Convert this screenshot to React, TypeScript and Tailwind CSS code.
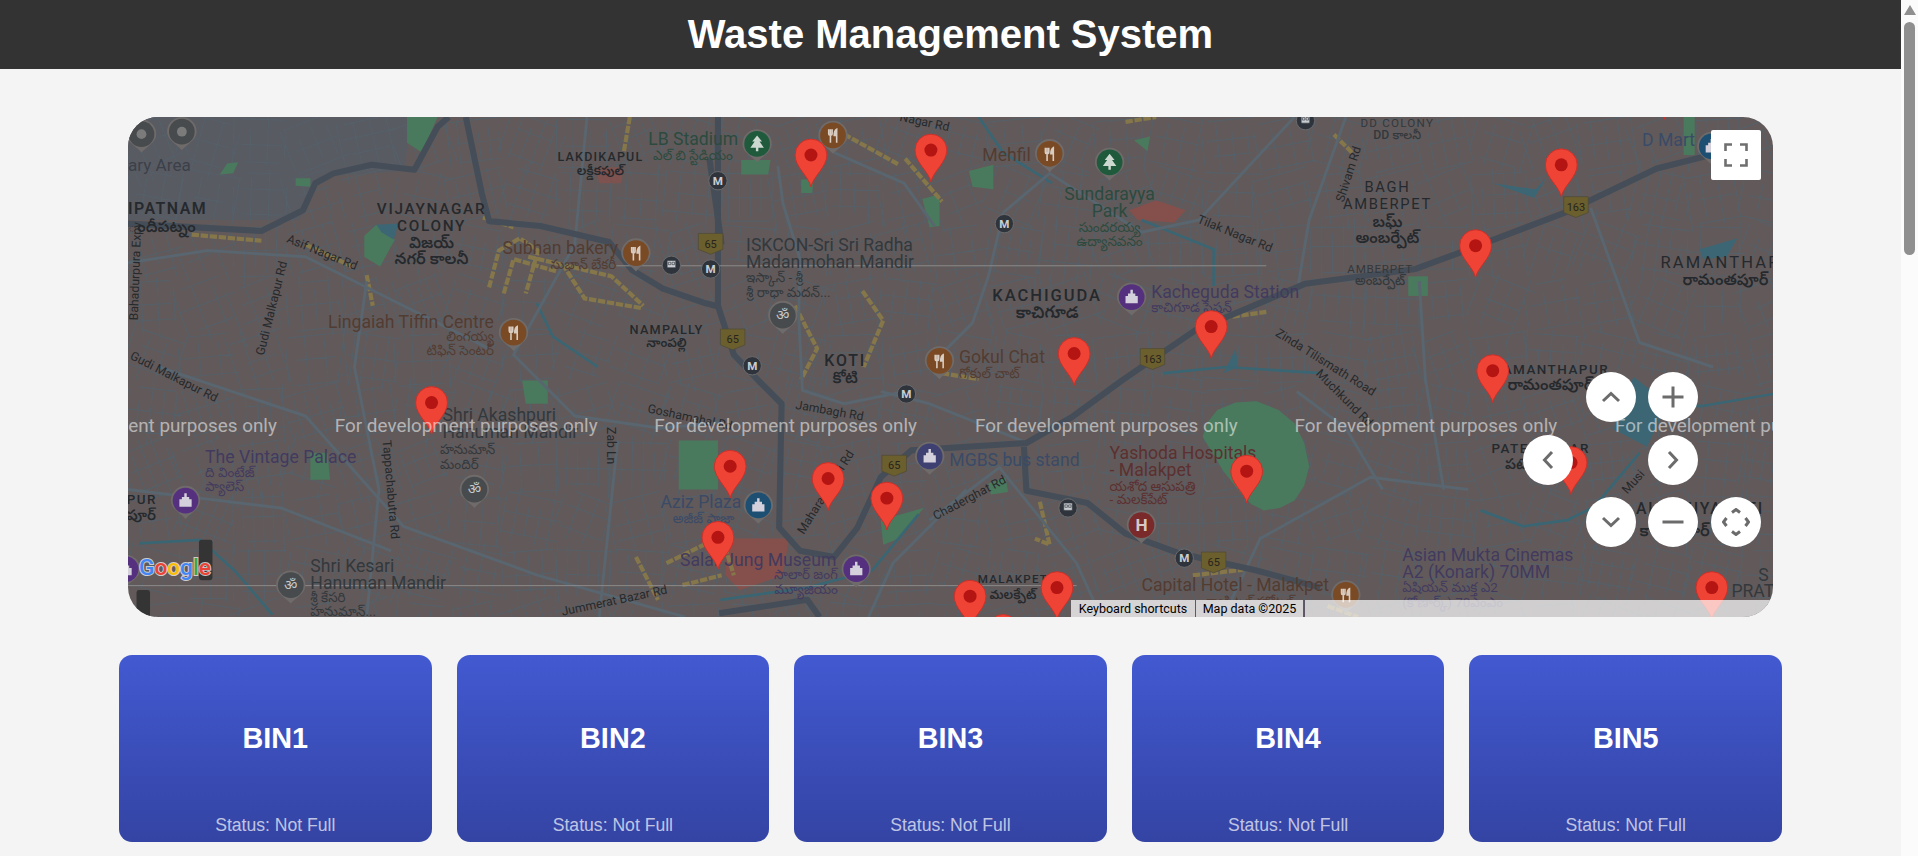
import React from 'react';

// all map geometry is in the coordinates of the 1568 wide preview (viewBox below)
const FONT = 'Roboto, "Noto Sans", "Noto Sans Telugu", sans-serif';

const AREA = '#25292d';
const BROWN = '#523c32';
const PURPLE = '#423a5f';
const GREEN = '#2c4a3e';
const NAVY = '#3b4a66';
const MAROON = '#5c3030';
const GREY = '#33383c';

type LabelRow = [string, number, number, number, string, 'start' | 'middle' | 'end', number?, number?];

const labels: LabelRow[] = [
  ['ary Area', 105, 140, 14, '#3c4048', 'start'],
  ['IPATNAM', 105, 175, 13, AREA, 'start', 600, 1.2],
  ['ందీపట్నం', 105, 190, 13, AREA, 'start', 600],
  ['VIJAYNAGAR', 353, 175, 12.5, AREA, 'middle', 500, 1.4],
  ['COLONY', 353, 189, 12.5, AREA, 'middle', 500, 1.4],
  ['విజయ్', 353, 203, 13, AREA, 'middle', 600],
  ['నగర్ కాలనీ', 353, 216, 13, AREA, 'middle', 600],
  ['LAKDIKAPUL', 491, 132, 10.2, AREA, 'middle', 500, 1],
  ['లక్డీకపుల్', 491, 143, 10.5, AREA, 'middle', 600],
  ['LB Stadium', 530, 119, 14.4, GREEN, 'start'],
  ['ఎల్ బి స్టేడియం', 534, 131, 11, GREEN, 'start'],
  ['Subhan bakery', 411, 208, 14.4, BROWN, 'start'],
  ['సుభాన్ బేకరీ', 504, 220, 11, BROWN, 'end'],
  ['Lingaiah Tiffin Centre', 404, 268, 14.4, BROWN, 'end'],
  ['లింగయ్య', 404, 279, 11, BROWN, 'end'],
  ['టిఫిన్ సెంటర్', 404, 290, 11, BROWN, 'end'],
  ['NAMPALLY', 545, 273, 10.4, AREA, 'middle', 500, 1],
  ['నాంపల్లి', 545, 284, 10.5, AREA, 'middle', 600],
  ['KOTI', 691, 299, 13, AREA, 'middle', 500, 1.5],
  ['కోటి', 691, 313, 13, AREA, 'middle', 600],
  ['Gokul Chat', 784, 297, 14.4, BROWN, 'start'],
  ['గోకుల్ చాట్', 784, 309, 11, BROWN, 'start'],
  ['ISKCON-Sri Sri Radha', 610, 205, 14.4, GREY, 'start'],
  ['Madanmohan Mandir', 610, 219, 14.4, GREY, 'start'],
  ['ఇస్కాన్ - శ్రీ', 610, 231, 11, GREY, 'start'],
  ['శ్రీ రాధా మదన్...', 610, 243, 11, GREY, 'start'],
  ['Mehfil', 803, 132, 14.4, BROWN, 'start'],
  ['Sundarayya', 907, 164, 14.4, GREEN, 'middle'],
  ['Park', 907, 178, 14.4, GREEN, 'middle'],
  ['సుందరయ్య', 907, 190, 11, GREEN, 'middle'],
  ['ఉద్యానవనం', 907, 201, 11, GREEN, 'middle'],
  ['KACHIGUDA', 856, 246, 13.5, AREA, 'middle', 500, 1.6],
  ['కాచిగూడ', 856, 260, 13.5, AREA, 'middle', 600],
  ['Kacheguda Station', 941, 244, 14.4, PURPLE, 'start'],
  ['కాచిగూడ స్టేషన్', 941, 255, 11, PURPLE, 'start'],
  ['DD COLONY', 1142, 104, 9.5, GREY, 'middle', 400, 1],
  ['DD కాలనీ', 1142, 114, 10, GREY, 'middle', 500],
  ['BAGH', 1134, 157, 12, AREA, 'middle', 400, 1.4],
  ['AMBERPET', 1134, 171, 12, AREA, 'middle', 400, 1.4],
  ['బఘ్', 1134, 186, 13, AREA, 'middle', 600],
  ['అంబర్పేట్', 1134, 199, 13, AREA, 'middle', 600],
  ['AMBERPET', 1128, 223, 9.5, GREY, 'middle', 400, 0.6],
  ['అంబర్పేట్', 1128, 233, 10.5, GREY, 'middle', 500],
  ['RAMANTHAPUR', 1357, 219, 13.5, AREA, 'start', 400, 1.8],
  ['రామంతపూర్', 1375, 233, 13, AREA, 'start', 600],
  ['D Mart', 1342, 120, 14.4, NAVY, 'start'],
  ['RAMANTHAPUR', 1220, 306, 11, AREA, 'start', 500, 1.2],
  ['రామంతపూర్', 1232, 319, 13, AREA, 'start', 600],
  ['Shri Akashpuri', 362, 344, 14.4, GREY, 'start'],
  ['Hanuman Mandir', 362, 358, 14.4, GREY, 'start'],
  ['హనుమాన్', 360, 371, 11, GREY, 'start'],
  ['మందిర్', 360, 383, 11, GREY, 'start'],
  ['The Vintage Palace', 168, 378, 14.4, PURPLE, 'start'],
  ['ది వింటేజ్', 168, 390, 11, PURPLE, 'start'],
  ['ప్యాలెస్', 168, 401, 11, PURPLE, 'start'],
  ['PUR', 104, 412, 11, AREA, 'start', 500, 1.2],
  ['పూర్', 104, 425, 12, AREA, 'start', 600],
  ['Shri Kesari', 254, 467, 14.4, GREY, 'start'],
  ['Hanuman Mandir', 254, 481, 14.4, GREY, 'start'],
  ['శ్రీ కేసరి', 254, 492, 11, GREY, 'start'],
  ['హనుమాన్...', 254, 503, 11, GREY, 'start'],
  ['Aziz Plaza', 540, 415, 14.4, NAVY, 'start'],
  ['అజీజ్ ప్లాజా', 550, 427, 11, NAVY, 'start'],
  ['Salar Jung Museum', 556, 462, 14.4, PURPLE, 'start'],
  ['సాలార్ జంగ్', 685, 473, 11, PURPLE, 'end'],
  ['మ్యూజియం', 685, 485, 11, PURPLE, 'end'],
  ['MGBS bus stand', 776, 381, 14.4, NAVY, 'start'],
  ['Yashoda Hospitals', 907, 375, 14.4, MAROON, 'start'],
  ['- Malakpet', 907, 389, 14.4, MAROON, 'start'],
  ['యశోద ఆసుపత్రి', 907, 401, 11, MAROON, 'start'],
  ['- మలక్‌పేట్', 907, 412, 11, MAROON, 'start'],
  ['MALAKPET', 828, 476, 9.5, AREA, 'middle', 500, 1],
  ['మలక్పేట్', 828, 489, 10.5, AREA, 'middle', 600],
  ['Capital Hotel - Malakpet', 933, 483, 14.4, BROWN, 'start'],
  ['క్యాపిటల్ హోటల్', 1058, 495, 11, BROWN, 'end'],
  ['Asian Mukta Cinemas', 1146, 458, 14.4, PURPLE, 'start'],
  ['A2 (Konark) 70MM', 1146, 472, 14.4, PURPLE, 'start'],
  ['ఏషియన్ ముక్త ఎ2', 1146, 484, 11, PURPLE, 'start'],
  ['(కోణార్క్) 70ఎంఎం', 1146, 496, 11, PURPLE, 'start'],
  ['PATELNAGAR', 1219, 370, 11, AREA, 'start', 500, 1.2],
  ['పటేల్', 1230, 383, 12, AREA, 'start', 600],
  ['ALVANIYAKUTI', 1337, 420, 13, AREA, 'start', 500, 1.4],
  ['కాలనీపూర్', 1340, 438, 13, AREA, 'start', 600],
  ['S', 1437, 475, 14.4, GREY, 'start'],
  ['PRAT', 1415, 488, 14.4, GREY, 'start'],
];

const roadLabels: [string, number, number, number][] = [
  ['Asif Nagar Rd', 234, 198, 22],
  ['Gudi Malkapur Rd', 216, 291, -76],
  ['Gudi Malkapur Rd', 106, 293, 27],
  ['Bahadurpura Expy', 113, 262, -88],
  ['Tappachabutra Rd', 313, 360, 85],
  ['Goshamahal Rd', 529, 337, 12],
  ['Zab Ln', 496, 349, 90],
  ['Jambagh Rd', 650, 334, 10],
  ['Maharaj Gansi Rd', 657, 437, -58],
  ['Chaderghat Rd', 765, 425, -28],
  ['Jummerat Bazar Rd', 460, 503, -12],
  ['Tilak Nagar Rd', 978, 182, 22],
  ['Shivam Rd', 1098, 166, -72],
  ['Zinda Tilismath Road', 1042, 274, 32],
  ['Muchkund Rd', 1075, 306, 45],
  ['Musi', 1330, 404, -48],
  ['Nagar Rd', 735, 99, 12],
];

const parks = [
  '333,96 358,96 345,125 333,117',
  '298,193 308,184 323,196 311,218 298,210',
  '180,143 186,134 195,133 191,142',
  '242,146 254,146 254,153 242,152',
  '254,370 268,370 270,392 254,392',
  '555,360 587,360 587,400 555,400',
  '427,311 448,311 448,330 430,330',
  '606,131 630,131 628,143 606,143',
  '754,163 768,159 768,185 760,186',
  '792,140 812,135 812,155 795,153',
  '927,115 940,112 938,124',
  '720,425 755,415 735,440 722,445',
  '808,395 822,390 824,402 810,404',
  '1151,226 1167,226 1167,242 1151,242',
  '983,357 987,345 995,335 1010,329 1027,328 1045,335 1058,346 1066,362 1070,381 1066,397 1058,409 1046,415 1033,417 1023,412 1017,406 1000,385',
  '655,147 665,147 664,158 655,158',
  '1376,96 1385,96 1385,127 1376,127',
];

const water = [
  'M114 444 L164 441 L192 466 L223 502',
  'M933 180 L992 204 L992 234',
  'M951 305 L1002 300 L1079 305',
  'M439 248 L452 275 L489 300',
  'M589 490 L660 480 L713 466 L751 420',
  'M1210 417 L1245 430 L1281 425 L1303 414 L1340 370',
  'M1363 330 L1390 332 L1449 322',
  'M800 96 L820 125 L860 150',
];

const lakes = [
  '1335,308 1363,330 1346,365 1319,351',
  '1220,150 1254,162 1264,145 1255,155',
  '1389,204 1420,195 1411,210 1392,212',
  '308,184 326,183 322,196 312,190',
  '1000,305 1010,285 1012,300',
];

const yellow = [
  'M157 192 L214 197',
  'M400 235 L408 205 L425 195 L440 205 L430 240',
  'M412 240 L420 212 L455 222',
  'M432 210 L500 226 L526 250',
  'M460 216 L478 244 L525 252',
  'M300 225 L305 250',
  'M250 200 L288 218',
  'M395 178 L420 186',
  'M740 130 L770 165',
  'M690 110 L735 135',
  'M515 96 L510 125',
  'M650 250 L668 285 L655 310',
  'M705 238 L722 262 L706 300',
  'M770 305 L800 310',
  'M920 100 L945 96',
  'M1000 260 L1035 255',
  'M545 460 L590 438 L600 470',
  'M558 478 L590 470',
  'M520 455 L538 490',
  'M850 410 L858 445 L846 440',
  'M1085 495 L1110 504',
  'M1105 125 L1090 110',
  'M975 470 L1020 465',
];

const minorRoads = [
  'M105 215 L170 205 L250 210 L310 240 L400 285',
  'M300 230 L290 300 L310 400 L300 504',
  'M130 300 L250 340 L330 430 L440 470 L560 504',
  'M105 400 L230 415 L320 450',
  'M480 96 L470 200 L420 290 L470 340 L540 350 L590 345',
  'M505 360 L490 504',
  'M636 136 L640 166 L654 212 L653 259 L656 319 L690 330 L740 320',
  'M682 125 L739 150 L764 185',
  'M820 174 L808 226 L795 264 L773 286',
  'M820 174 L858 142 L933 190 L980 180 L1058 96',
  'M1100 96 L1070 180 L1060 240',
  'M760 425 L817 382 L880 460 L900 504',
  'M835 360 L760 330 L720 320',
  'M1000 504 L1030 440 L1120 390 L1200 400',
  'M1160 230 L1165 310 L1180 400',
  'M1300 170 L1340 280 L1400 300',
  'M1060 320 L1100 350 L1130 400',
  'M790 400 L730 460 L710 504',
];

const majorRoads = [
  'M105 183 L214 189 L248 172 L258 150 L273 142 L304 135 L339 139 L358 104 L367 96',
  'M381 96 L394 158 L400 181 L442 185 L498 198 L517 221 L542 236 L577 248 L589 251',
  'M587 96 L587 250 L600 290 L620 311 L639 330 L637 431 L654 450 L682 455 L701 431 L720 390 L745 368 L839 362 L876 341 L917 311 L977 270 L1067 232 L1157 220 L1192 207 L1279 174 L1354 138 L1398 127',
  'M837 365 L839 401 L889 411 L920 436 L964 452 L1027 466 L1079 480',
  'M588 501 L660 490 L670 504',
  'M580 130 L590 200',
];

const metros: [number, number, string][] = [
  [587, 148, 'M'], [581, 220, 'M'], [821, 183, 'M'], [615, 299, 'M'], [741, 322, 'M'], [968, 456, 'M'],
  [549, 217, 'B'], [873, 415, 'B'], [1067, 99, 'B'],
];

const shields: [number, number, string][] = [
  [581, 199, '65'], [599, 277, '65'], [731, 380, '65'], [992, 459, '65'], [942, 293, '163'], [1288, 169, '163'],
];

const pois: [number, number, string, string][] = [
  [681, 111, '#7a4a25', 'food'], [520, 207, '#7a4a25', 'food'], [420, 272, '#7a4a25', 'food'],
  [858, 126, '#7a4a25', 'food'], [768, 295, '#7a4a25', 'food'], [1100, 486, '#7a4a25', 'food'],
  [619, 118, '#1f5a3c', 'tree'], [907, 133, '#1f5a3c', 'tree'],
  [640, 258, '#474b4d', 'om'], [388, 400, '#474b4d', 'om'], [238, 478, '#474b4d', 'om'],
  [152, 409, '#55307f', 'box'], [925, 243, '#55307f', 'box'], [700, 465, '#55307f', 'box'], [103, 465, '#55307f', 'box'],
  [620, 413, '#1d4f72', 'box'], [760, 373, '#3d4070', 'box'], [1399, 120, '#1d4f72', 'box'],
  [933, 429, '#7a2a2a', 'H'], [116, 110, '#474b4d', 'ring'], [149, 108, '#474b4d', 'ring'],
];

const pins: [number, number][] = [
  [663, 153], [761, 149], [1276, 161], [1206, 227], [990, 293], [878, 315], [1220, 329], [353, 355],
  [597, 407], [677, 417], [725, 433], [587, 465], [1019, 411], [1284, 404], [793, 513], [864, 506],
  [1399, 506], [820, 541], [1360, 98],
];

const devStarts = [12, 274, 535, 797, 1058, 1320];

// seeded street mesh so the fine road texture stays the same on each load
function buildStreets() {
  let seed = 41;
  const rand = () => {
    seed = (seed * 16807) % 2147483647;
    return seed / 2147483647;
  };
  let d = '';
  for (let gx = 105; gx < 1449; gx += 44) {
    for (let gy = 96; gy < 504; gy += 44) {
      const a = rand() * 0.8 - 0.4;
      const cos = Math.cos(a);
      const sin = Math.sin(a);
      const cx = gx + 22;
      const cy = gy + 22;
      const gap = 8 + rand() * 9;
      for (let t = -24; t <= 24; t += gap) {
        const len = 10 + rand() * 16;
        const off = rand() * 8 - 4;
        d += `M${(cx + cos * t - sin * (off - len)).toFixed(1)} ${(cy + sin * t + cos * (off - len)).toFixed(1)}`;
        d += `L${(cx + cos * t - sin * (off + len)).toFixed(1)} ${(cy + sin * t + cos * (off + len)).toFixed(1)}`;
      }
      for (let t = -20; t <= 20; t += 12 + rand() * 10) {
        const len = 12 + rand() * 12;
        d += `M${(cx - cos * len - sin * t).toFixed(1)} ${(cy - sin * len + cos * t).toFixed(1)}`;
        d += `L${(cx + cos * len - sin * t).toFixed(1)} ${(cy + sin * len + cos * t).toFixed(1)}`;
      }
    }
  }
  return d;
}

const streets = buildStreets();

function PoiGlyph({ kind }: { kind: string }) {
  if (kind === 'food') {
    return (
      <g stroke="#d9ccc0" strokeWidth="1.3" fill="none">
        <path d="M-3.5 -5v3.5a1.4 1.4 0 0 0 2.8 0V-5M-2.1 -5v11" />
        <path d="M3 6V-5c-1.6 .8 -2 3 -2 5h2" fill="#d9ccc0" />
      </g>
    );
  }
  if (kind === 'tree') return <path d="M0 -7l4 5h-2l3.5 5h-4.5v3h-2v-3h-4.5l3.5-5h-2z" fill="#cdd8d0" />;
  if (kind === 'om') {
    return (
      <text y="4" textAnchor="middle" fontSize="12" fill="#c8c8c8" fontFamily={FONT}>
        ॐ
      </text>
    );
  }
  if (kind === 'H') {
    return (
      <text y="5" textAnchor="middle" fontSize="14" fontWeight="700" fill="#d8c8c8" fontFamily={FONT}>
        H
      </text>
    );
  }
  if (kind === 'ring') return <circle r="4" fill="#7b7b7b" />;
  return <path d="M-5 5V-1h2v-2h2v-3h2v3h2v2h2v6z" fill="#d4d0dc" />;
}

function MapPin({ x, y }: { x: number; y: number }) {
  return (
    <g transform={`translate(${x} ${y})`}>
      <path
        d="M0 0C-2 -9 -13 -16 -13 -26A13 13 0 1 1 13 -26C13 -16 2 -9 0 0Z"
        fill="#ef4335"
        stroke="#c9302a"
        strokeWidth="0.8"
      />
      <circle cy="-26" r="5.3" fill="#b41412" />
    </g>
  );
}

function CityMap() {
  return (
    <svg className="block w-full h-full" viewBox="105 96 1344 408" preserveAspectRatio="none">
      <rect x="105" y="96" width="1344" height="408" fill="#625a5a" />
      <polygon points="105,96 338,96 330,140 262,145 245,180 105,180" fill="#595b63" />
      <path d={streets} stroke="#546069" strokeWidth="0.9" fill="none" opacity="0.9" />
      {parks.map((p) => (
        <polygon key={p} points={p} fill="#4a7a5d" />
      ))}
      <polygon points="923,172 945,164 969,172 960,182 930,180" fill="#85504c" />
      <polygon points="595,440 645,440 640,470 605,482 593,470" fill="#85504c" />
      <polygon points="487,137 510,137 508,150 490,150" fill="#85504c" opacity="0.8" />
      {lakes.map((p) => (
        <polygon key={p} points={p} fill="#3d6675" />
      ))}
      {water.map((d) => (
        <path key={d} d={d} stroke="#3a6674" strokeWidth="2.2" fill="none" />
      ))}
      {yellow.map((d) => (
        <path key={d} d={d} stroke="#85774a" strokeWidth="3.4" strokeDasharray="6 1.4" fill="none" />
      ))}
      {minorRoads.map((d) => (
        <path key={d} d={d} stroke="#59656f" strokeWidth="2.4" fill="none" strokeLinejoin="round" />
      ))}
      {majorRoads.map((d) => (
        <path key={d} d={d} stroke="#454e58" strokeWidth="5" fill="none" strokeLinejoin="round" />
      ))}
      {/* tile seams */}
      <rect x="504" y="217" width="531" height="0.8" fill="#8c8a8a" />
      <rect x="105" y="478" width="775" height="0.8" fill="#8c8a8a" />
      {pois.map(([x, y, color, kind]) => (
        <g key={`${x}-${y}`} transform={`translate(${x} ${y})`}>
          <path d="M-12 0A12 12 0 0 1 12 0C12 7 4 10 0 15C-4 10 -12 7 -12 0Z" fill="#6f6b6a" />
          <circle r="10.5" fill={color} />
          <PoiGlyph kind={kind} />
        </g>
      ))}
      {metros.map(([x, y, t]) => (
        <g key={`${x}-${y}`} transform={`translate(${x} ${y})`}>
          <circle r="7.5" fill="#2f343c" stroke="#6b6b6d" strokeWidth="0.8" />
          {t === 'M' ? (
            <text y="3.5" textAnchor="middle" fontSize="9.5" fontWeight="700" fill="#c9cdd2" fontFamily={FONT}>
              M
            </text>
          ) : (
            <path d="M-3.5 -4h7v6h-7zM-2.5 -2.5h2v2h-2zM.5 -2.5h2v2h-2zM-3 2l-1 2.5M3 2l1 2.5" fill="#c9cdd2" stroke="#2f343c" strokeWidth="0.5" />
          )}
        </g>
      ))}
      {shields.map(([x, y, t]) => (
        <g key={`${x}-${y}`} transform={`translate(${x} ${y})`}>
          <path d="M-10 -8H10V5L0 9L-10 5Z" fill="#6c5f2e" stroke="#4e4a38" strokeWidth="0.6" />
          <text y="3.5" textAnchor="middle" fontSize="9" fill="#27251c" fontFamily={FONT}>
            {t}
          </text>
        </g>
      ))}
      {labels.map(([text, x, y, size, color, anchor, weight, spacing]) => (
        <text
          key={`${text}-${x}-${y}`}
          x={x}
          y={y}
          fontSize={size}
          fill={color}
          textAnchor={anchor}
          fontWeight={weight ?? 400}
          letterSpacing={spacing ?? 0}
          fontFamily={FONT}
        >
          {text}
        </text>
      ))}
      {roadLabels.map(([text, x, y, rot]) => (
        <text
          key={`${text}-${x}`}
          transform={`translate(${x} ${y}) rotate(${rot})`}
          fontSize="10"
          fill="#26292c"
          fontFamily={FONT}
        >
          {text}
        </text>
      ))}
      {pins.map(([x, y]) => (
        <MapPin key={`${x}-${y}`} x={x} y={y} />
      ))}
      {devStarts.map((x) => (
        <text key={x} x={x} y="353" fontSize="15.4" fill="#ffffff" fillOpacity="0.55" fontFamily={FONT}>
          For development purposes only
        </text>
      ))}
      {/* stray dark tiles by the logo */}
      <rect x="163" y="441" width="11" height="33" rx="2" fill="#343434" />
      <rect x="112" y="482" width="11" height="24" rx="2" fill="#343434" />
      <text
        x="114"
        y="470"
        fontSize="18.5"
        fontWeight="500"
        fontFamily={FONT}
        stroke="#f4f4f4"
        strokeOpacity="0.75"
        strokeWidth="1.6"
        paintOrder="stroke"
      >
        <tspan fill="#4285f4">G</tspan>
        <tspan fill="#ea4335">o</tspan>
        <tspan fill="#fbbc05">o</tspan>
        <tspan fill="#4285f4">g</tspan>
        <tspan fill="#34a853">l</tspan>
        <tspan fill="#ea4335">e</tspan>
      </text>
    </svg>
  );
}

function RoundButton({ label, className, children }: { label: string; className: string; children: React.ReactNode }) {
  return (
    <button
      type="button"
      aria-label={label}
      className={`w-[50px] h-[50px] rounded-full bg-white flex items-center justify-center ${className}`}
    >
      <svg width="28" height="28" viewBox="0 0 28 28" fill="none" stroke="#6b6b6b" strokeWidth="3">
        {children}
      </svg>
    </button>
  );
}

function MapControls() {
  return (
    <div className="absolute left-[1395px] top-[255px] grid grid-cols-[50px_50px_50px_50px] grid-rows-[50px_50px_50px] gap-x-[12.6px] gap-y-[12.5px]">
      <RoundButton label="Move up" className="col-start-2 row-start-1">
        <path d="M6 18L14 10.5L22 18" />
      </RoundButton>
      <RoundButton label="Zoom in" className="col-start-3 row-start-1">
        <path d="M3.5 14H24.5M14 3.5V24.5" />
      </RoundButton>
      <RoundButton label="Move left" className="col-start-1 row-start-2">
        <path d="M18 6L10.5 14L18 22" />
      </RoundButton>
      <RoundButton label="Move right" className="col-start-3 row-start-2">
        <path d="M10 6L17.5 14L10 22" />
      </RoundButton>
      <RoundButton label="Move down" className="col-start-2 row-start-3">
        <path d="M6 10L14 17.5L22 10" />
      </RoundButton>
      <RoundButton label="Zoom out" className="col-start-3 row-start-3">
        <path d="M3.5 14H24.5" />
      </RoundButton>
      <RoundButton label="Reset view" className="col-start-4 row-start-3">
        <path d="M10 4.5L14 1.5L18 4.5M10 23.5L14 26.5L18 23.5M4.5 10L1.5 14L4.5 18M23.5 10L26.5 14L23.5 18" />
      </RoundButton>
    </div>
  );
}

export default function App() {
  const bins = ['BIN1', 'BIN2', 'BIN3', 'BIN4', 'BIN5'];

  return (
    <div className="flex h-[856px] overflow-hidden bg-[#f4f4f4] font-['Liberation_Sans',Arial,sans-serif]">
      <div className="w-[1901px] shrink-0">
        <header className="h-[69px] bg-[#333333] flex items-center justify-center pb-[2px]">
          <h1 className="text-[40px] font-bold text-white">Waste Management System</h1>
        </header>

        <div className="relative w-[1645px] h-[500px] mx-auto mt-[48px] rounded-[30px] overflow-hidden">
          <CityMap />

          <button
            type="button"
            aria-label="Toggle fullscreen"
            className="absolute left-[1583px] top-[13px] w-[50px] h-[50px] bg-white rounded-[2px] flex items-center justify-center"
          >
            <svg width="24" height="24" viewBox="0 0 24 24" fill="none" stroke="#6f6f6f" strokeWidth="2.6">
              <path d="M1.5 8V1.5H8M16 1.5H22.5V8M22.5 16V22.5H16M8 22.5H1.5V16" />
            </svg>
          </button>

          <MapControls />

          {/* attribution strip */}
          <div className="absolute left-0 right-0 bottom-0 h-[17px] flex justify-end text-[12.5px] leading-[17px] text-black font-['Roboto',sans-serif]">
            <div className="w-[124px] text-center bg-[#d6d4d4] mr-[1px]">Keyboard shortcuts</div>
            <div className="w-[107px] text-center bg-[#d6d4d4] mr-[1px]">Map data ©2025</div>
            <div className="w-[469px] bg-white/70 border-l border-[#5b5566]" />
          </div>
        </div>

        <div className="grid grid-cols-5 gap-[25px] w-[1663px] mx-auto mt-[38px]">
          {bins.map((bin) => (
            <div
              key={bin}
              className="h-[187px] rounded-[13px] bg-gradient-to-b from-[#4259d1] to-[#3444a4] flex flex-col items-center justify-between pt-[67px] pb-[7px]"
            >
              <h2 className="text-[28.8px] leading-[33px] font-bold text-white">{bin}</h2>
              <p className="text-[17.6px] leading-[20px] text-white/70">Status: Not Full</p>
            </div>
          ))}
        </div>
      </div>

      {/* page scrollbar */}
      <div className="w-[17px] h-full bg-[#fbfbfb] flex flex-col items-center">
        <div className="mt-[5px] w-0 h-0 border-x-[6px] border-x-transparent border-b-[10px] border-b-[#8f8f8f]" />
        <div className="mt-[7px] w-[11px] h-[233px] rounded-[6px] bg-[#8f8f8f]" />
      </div>
    </div>
  );
}
